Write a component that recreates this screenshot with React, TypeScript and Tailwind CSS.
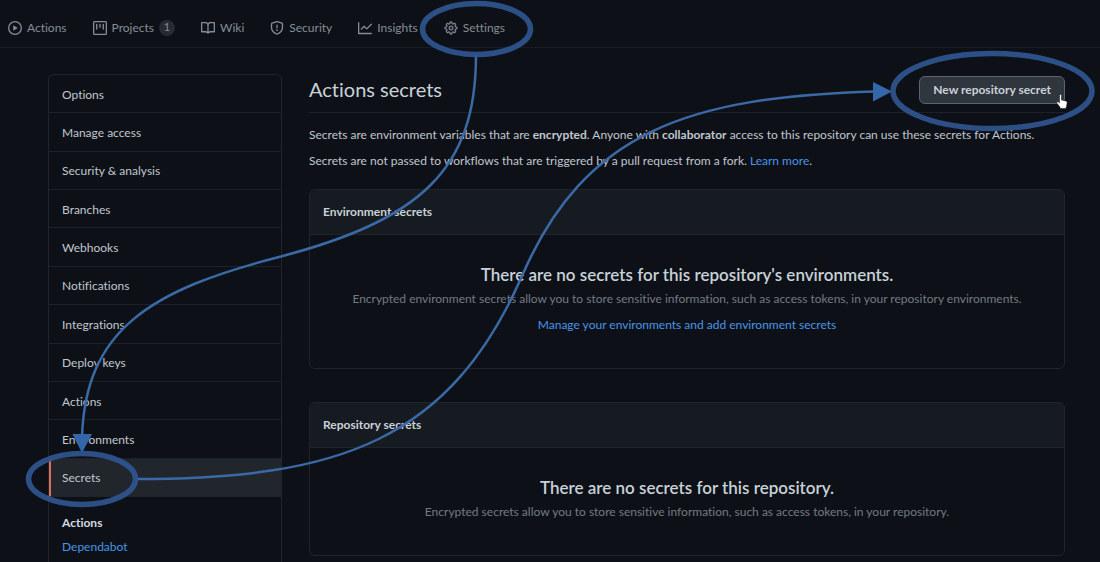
import type { ReactNode } from "react";
import { GoGear } from "react-icons/go";

function Octicon({ d }: { d: string }) {
  return (
    <svg viewBox="0 0 16 16" className="size-[14px] shrink-0 fill-current" aria-hidden="true">
      <path fillRule="evenodd" d={d} />
    </svg>
  );
}

const PLAY =
  "M1.5 8a6.5 6.5 0 1113 0 6.5 6.5 0 01-13 0zM8 0a8 8 0 100 16A8 8 0 008 0zM6.379 5.227A.25.25 0 006 5.442v5.117a.25.25 0 00.379.214l4.264-2.559a.25.25 0 000-.428L6.379 5.227z";
const PROJECT =
  "M1.75 0A1.75 1.75 0 000 1.75v12.5C0 15.216.784 16 1.75 16h12.5A1.75 1.75 0 0016 14.25V1.75A1.75 1.75 0 0014.25 0H1.75zM1.5 1.75a.25.25 0 01.25-.25h12.5a.25.25 0 01.25.25v12.5a.25.25 0 01-.25.25H1.75a.25.25 0 01-.25-.25V1.75zM11.75 3a.75.75 0 00-.75.75v5.5a.75.75 0 001.5 0v-5.5a.75.75 0 00-.75-.75zm-8.25.75a.75.75 0 011.5 0v5.5a.75.75 0 01-1.5 0v-5.5zM8 3a.75.75 0 00-.75.75v3.5a.75.75 0 001.5 0v-3.5A.75.75 0 008 3z";
const BOOK =
  "M0 1.75A.75.75 0 01.75 1h4.253c1.227 0 2.317.59 3 1.501A3.744 3.744 0 0111.006 1h4.245a.75.75 0 01.75.75v10.5a.75.75 0 01-.75.75h-4.507a2.25 2.25 0 00-1.591.659l-.622.621a.75.75 0 01-1.06 0l-.622-.621A2.25 2.25 0 005.258 13H.75a.75.75 0 01-.75-.75V1.75zm8.755 3a2.25 2.25 0 012.25-2.25H14.5v9h-3.757c-.71 0-1.4.201-1.992.572l.004-7.322zm-1.504 7.324l.004-5.073-.002-2.253A2.25 2.25 0 005.003 2.5H1.5v9h3.757a3.75 3.75 0 011.994.574z";
const SHIELD =
  "M7.467.133a1.75 1.75 0 011.066 0l5.25 1.68A1.75 1.75 0 0115 3.48V7c0 1.566-.32 3.182-1.303 4.682-.983 1.498-2.585 2.813-5.032 3.855a1.7 1.7 0 01-1.33 0c-2.447-1.042-4.049-2.357-5.032-3.855C1.32 10.182 1 8.566 1 7V3.48a1.75 1.75 0 011.217-1.667l5.25-1.68zm.61 1.429a.25.25 0 00-.153 0l-5.25 1.68a.25.25 0 00-.174.238V7c0 1.358.275 2.666 1.057 3.86.784 1.194 2.121 2.34 4.366 3.297a.2.2 0 00.154 0c2.245-.956 3.582-2.104 4.366-3.298C13.225 9.666 13.5 8.36 13.5 7V3.48a.25.25 0 00-.174-.237l-5.25-1.68zM9 10.5a1 1 0 11-2 0 1 1 0 012 0zm-.25-5.75a.75.75 0 10-1.5 0v3a.75.75 0 001.5 0v-3z";
const GRAPH =
  "M1.5 1.75a.75.75 0 00-1.5 0v12.5c0 .414.336.75.75.75h14.5a.75.75 0 000-1.5H1.5V1.75zm14.28 2.53a.75.75 0 00-1.06-1.06L10 7.94 7.53 5.47a.75.75 0 00-1.06 0L3.22 8.72a.75.75 0 001.06 1.06L7 7.06l2.47 2.47a.75.75 0 001.06 0l5.25-5.25z";

const tabs: { label: string; icon: ReactNode; count?: number }[] = [
  { label: "Actions", icon: <Octicon d={PLAY} /> },
  { label: "Projects", icon: <Octicon d={PROJECT} />, count: 1 },
  { label: "Wiki", icon: <Octicon d={BOOK} /> },
  { label: "Security", icon: <Octicon d={SHIELD} /> },
  { label: "Insights", icon: <Octicon d={GRAPH} /> },
  { label: "Settings", icon: <GoGear className="size-[14px] shrink-0 stroke-current stroke-[0.7]" /> },
];

const menu = [
  "Options",
  "Manage access",
  "Security & analysis",
  "Branches",
  "Webhooks",
  "Notifications",
  "Integrations",
  "Deploy keys",
  "Actions",
  "Environments",
  "Secrets",
];

function Panel({ title, children }: { title: string; children: ReactNode }) {
  return (
    <section className="overflow-hidden rounded-md border border-[#20252c]">
      <h2 className="border-b border-[#20252c] bg-[#161b22] px-[13px] py-3 text-[12px] leading-5 font-bold text-[#c9d1d9]">
        {title}
      </h2>
      <div className="px-6 pt-7 pb-[33px] text-center">{children}</div>
    </section>
  );
}

function Annotations() {
  return (
    <svg
      width="1100"
      height="562"
      viewBox="0 0 1100 562"
      fill="none"
      className="pointer-events-none absolute top-0 left-0"
      aria-hidden="true"
    >
      <g stroke="#3a69a6" strokeWidth="2.5">
        <path d="M476 55C476 170 420 220 279 257C150 290 85 330 82 438" />
        <path d="M137 479C340 479 450 440 522 276C585 130 690 97 875 91.5" />
      </g>
      <path d="M72.5 434H92L82 453Z M873 82V101.500L892 91.500Z" fill="#3467a9" />
      <g stroke="#2f5590" strokeWidth="5.5" strokeOpacity="0.92">
        <ellipse cx="476.5" cy="29" rx="54" ry="25.5" />
        <ellipse cx="82" cy="479" rx="53.5" ry="25.5" />
        <ellipse cx="992.5" cy="91" rx="99.5" ry="37.5" />
      </g>
      <path
        d="M1059.500 95.500c0-1.300 2-1.300 2 0v4.500l4.200.9c1 .3 1.500.9 1.400 1.900l-.6 3.600-.8 2h-5.200l-.8-1.600-2.700-3.600c-.7-1.100.6-2 1.500-1.200l1 .9z"
        fill="#fff"
        stroke="#111"
        strokeWidth="0.5"
      />
    </svg>
  );
}

export default function App() {
  return (
    <div className="relative h-screen overflow-hidden bg-[#0d1117] font-[Lato,'Open_Sans',sans-serif] text-[12px] text-[#c0c7cf] [font-variant-ligatures:none]">
      <nav className="flex h-12 items-center gap-[26px] border-b border-[#181d24] pt-2 pl-2 text-[#858d96]">
        {tabs.map((t) => (
          <a key={t.label} href="#" className="flex items-center gap-[5px]">
            {t.icon}
            {t.label}
            {t.count !== undefined && (
              <span className="flex size-4 items-center justify-center rounded-full bg-[#262b33] text-[11px]">
                {t.count}
              </span>
            )}
          </a>
        ))}
      </nav>

      <div className="flex gap-[27px] pt-[26px] pr-[35px] pl-12">
        <aside className="h-[520px] w-[234px] shrink-0 rounded-md border border-[#20252c]">
          <ul className="grid h-[422px] auto-rows-fr">
            {menu.map((m) => (
              <li
                key={m}
                className={
                  m === "Secrets"
                    ? "flex items-center border-b border-l-2 border-b-[#20252c] border-l-[#d8705c] bg-[#21262d] pt-[2px] pl-[11px]"
                    : "flex items-center border-b border-[#1c2128] pt-[2px] pl-[13px]"
                }
              >
                <a href="#">{m}</a>
              </li>
            ))}
          </ul>
          <div className="flex flex-col gap-1 px-[13px] pt-4 leading-5">
            <a href="#" className="font-bold text-[#d5dbe1]">
              Actions
            </a>
            <a href="#" className="text-[#4a94e8]">
              Dependabot
            </a>
          </div>
        </aside>

        <main className="min-w-0 grow">
          <header className="flex h-[39px] items-start justify-between border-b border-[#1c2128]">
            <h1 className="text-[20px] leading-[30px] text-[#c9d1d9]">Actions secrets</h1>
            <button className="mt-[2px] h-7 rounded-md border border-[#5d646d] bg-[#30363d] px-[13px] font-bold text-[#c9d1d9]">
              New repository secret
            </button>
          </header>
          <p className="mt-3 leading-5">
            Secrets are environment variables that are <b>encrypted</b>. Anyone with <b>collaborator</b> access to this
            repository can use these secrets for Actions.
          </p>
          <p className="mt-[6px] mb-[18px] leading-5">
            Secrets are not passed to workflows that are triggered by a pull request from a fork.{" "}
            <a href="#" className="text-[#4a94e8]">
              Learn more
            </a>
            .
          </p>

          <div className="flex flex-col gap-[33px]">
            <Panel title="Environment secrets">
              <h3 className="text-[17px] leading-6 font-semibold text-[#c9d1d9]">
                There are no secrets for this repository's environments.
              </h3>
              <p className="mt-[2px] leading-5 text-[#737a83]">
                Encrypted environment secrets allow you to store sensitive information, such as access tokens, in your
                repository environments.
              </p>
              <p className="mt-[6px] leading-5">
                <a href="#" className="text-[#4a94e8]">
                  Manage your environments and add environment secrets
                </a>
              </p>
            </Panel>
            <Panel title="Repository secrets">
              <h3 className="text-[17px] leading-6 font-semibold text-[#c9d1d9]">
                There are no secrets for this repository.
              </h3>
              <p className="mt-[2px] leading-5 text-[#737a83]">
                Encrypted secrets allow you to store sensitive information, such as access tokens, in your repository.
              </p>
            </Panel>
          </div>
        </main>
      </div>

      <Annotations />
    </div>
  );
}
